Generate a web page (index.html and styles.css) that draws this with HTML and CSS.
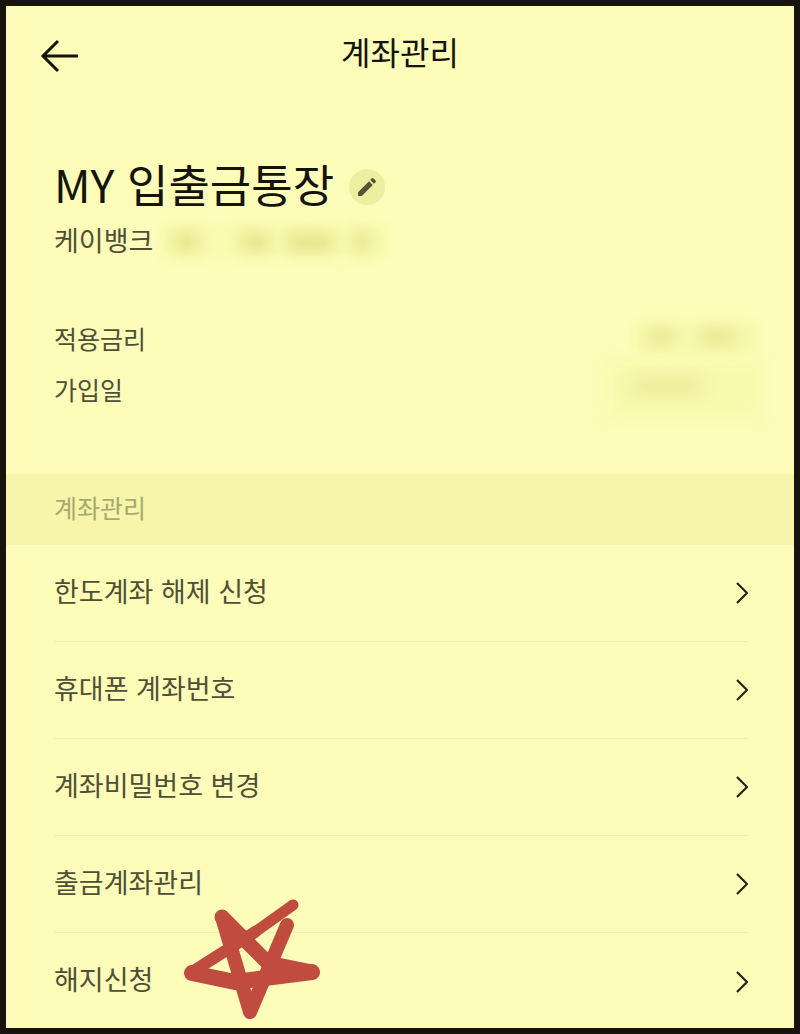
FILE: index.html
```html
<!DOCTYPE html>
<html lang="ko">
<head>
<meta charset="utf-8">
<title>계좌관리</title>
<link rel="stylesheet" href="styles.css">
</head>
<body>
<main class="screen">
  <header class="topbar">
    <svg class="back" viewBox="0 0 40 34" width="40" height="34"><path d="M38 17H3M18 2 3 17l15 15" /></svg>
    <h1 class="page-title">계좌관리</h1>
  </header>
  <section class="account">
    <div class="name-row">
      <h2 class="account-name">MY 입출금통장</h2>
      <span class="edit">
        <svg viewBox="0 0 24 24" width="24" height="24"><path d="M3 17.25V21h3.75L17.81 9.94l-3.75-3.75L3 17.25zM20.71 7.04a1 1 0 0 0 0-1.41l-2.34-2.34a1 1 0 0 0-1.41 0l-1.83 1.83 3.75 3.75 1.83-1.83z"/></svg>
      </span>
    </div>
    <div class="bank-row">
      <span class="bank">케이뱅크</span>
      <span class="redact redact-number"><i class="smear s1"></i><i class="smear s2"></i><i class="smear s3"></i><i class="smear s3b"></i></span>
    </div>
  </section>
  <section class="facts">
    <div class="fact fact-rate">
      <span>적용금리</span>
      <span class="redact redact-rate"><i class="smear s4"></i><i class="smear s5"></i></span>
    </div>
    <div class="fact fact-date">
      <span>가입일</span>
      <span class="redact redact-date"><i class="smear s6"></i></span>
    </div>
  </section>
  <div class="section-head">계좌관리</div>
  <ul class="menu">
    <li class="item"><span>한도계좌 해제 신청</span><svg class="chev" viewBox="0 0 14 24" width="14" height="24"><path d="M3 2l10 10L3 22"/></svg></li>
    <li class="item"><span>휴대폰 계좌번호</span><svg class="chev" viewBox="0 0 14 24" width="14" height="24"><path d="M3 2l10 10L3 22"/></svg></li>
    <li class="item"><span>계좌비밀번호 변경</span><svg class="chev" viewBox="0 0 14 24" width="14" height="24"><path d="M3 2l10 10L3 22"/></svg></li>
    <li class="item"><span>출금계좌관리</span><svg class="chev" viewBox="0 0 14 24" width="14" height="24"><path d="M3 2l10 10L3 22"/></svg></li>
    <li class="item"><span>해지신청</span><svg class="chev" viewBox="0 0 14 24" width="14" height="24"><path d="M3 2l10 10L3 22"/></svg></li>
  </ul>
  <svg class="star" viewBox="0 0 150 130" width="150" height="130">
    <path class="star-thin" d="M118 10 L80 37"/>
    <path class="star-mid" d="M80 37 L17 77"/>
    <path class="star-wide" d="M17 78 L60 87 L137 77"/>
    <path class="star-leg" d="M47 22 L75 117 L112 30"/>
    <path d="M47 22 L93 68 L137 77"/>
  </svg>
</main>
</body>
</html>
```
FILE: styles.css
```css
* { box-sizing: border-box; }
html, body { margin: 0; padding: 0; }
body {
  width: 800px;
  height: 1034px;
  background: #16140c;
  padding: 6px;
  font-family: "Noto Sans CJK KR", "Noto Sans", sans-serif;
  overflow: hidden;
}
.screen {
  position: relative;
  width: 788px;
  height: 1022px;
  background: #fdfcb8;
  overflow: hidden;
}
.topbar {
  position: relative;
  height: 94px;
  display: flex;
  align-items: center;
  justify-content: center;
}
.back {
  position: absolute;
  left: 34px;
  top: 33px;
  fill: none;
  stroke: #14130c;
  stroke-width: 3;
}
.page-title {
  margin: 0 0 4px;
  font-size: 32px;
  line-height: 94px;
  font-weight: 400;
  color: #14130c;
}
.account { padding: 48px 0 0 48px; }
.name-row { display: flex; align-items: center; gap: 15px; height: 72px; }
.account-name {
  margin: 0;
  font-size: 45px;
  line-height: 72px;
  font-weight: 400;
  color: #14130c;
  white-space: nowrap;
}
.edit {
  width: 36px;
  height: 36px;
  margin-top: 6px;
  border-radius: 50%;
  background: #eeeea0;
  display: flex;
  align-items: center;
  justify-content: center;
}
.edit svg { fill: #55553a; }
.bank-row { display: flex; align-items: center; gap: 8px; height: 34px; margin-top: 3px; }
.bank { font-size: 27px; line-height: 34px; color: #4f4f36; white-space: nowrap; }
.redact { display: block; position: relative; background: #fafab0; filter: blur(2px); }
.redact-number { width: 227px; height: 33px; }
.smear { position: absolute; display: block; background: #e6e68f; filter: blur(7px); }
.s1 { left: 12px; top: 8px; width: 26px; height: 20px; }
.s2 { left: 80px; top: 8px; width: 28px; height: 20px; }
.s3 { left: 126px; top: 8px; width: 46px; height: 20px; }
.s3b { left: 192px; top: 8px; width: 18px; height: 20px; }
.facts { padding: 56px 28px 0 48px; }
.fact { display: flex; align-items: center; justify-content: space-between; font-size: 25px; color: #4f4f36; }
.fact-rate { height: 50px; }
.fact-date { height: 52px; }
.redact-rate { width: 122px; height: 30px; margin-right: 9px; background: #f9f9ae; filter: blur(3px); }
.redact-date { width: 150px; height: 54px; margin-right: 6px; background: #f9f9ae; filter: blur(6px); }
.s4 { left: 14px; top: 6px; width: 24px; height: 16px; }
.s5 { left: 66px; top: 6px; width: 34px; height: 16px; }
.s6 { left: 22px; top: 16px; width: 70px; height: 16px; background: #eaea95; }
.section-head {
  margin-top: 59px;
  height: 71px;
  padding-left: 48px;
  background: #f6f5a9;
  font-size: 25px;
  line-height: 67px;
  color: #a8a86f;
}
.menu { list-style: none; margin: 0; padding: 0 46px 0 48px; }
.item {
  height: 97px;
  display: flex;
  align-items: center;
  justify-content: space-between;
  border-bottom: 1px solid #f1f0ae;
  font-size: 27px;
  color: #4f4f36;
  padding-bottom: 6px;
}
.item:last-child { border-bottom: 0; }
.chev { margin-top: 6px; fill: none; stroke: #26241a; stroke-width: 2.2; }
.star {
  position: absolute;
  left: 169px;
  top: 889px;
  fill: none;
  stroke: #c04b3f;
  stroke-width: 15;
  stroke-linecap: round;
  stroke-linejoin: round;
}
.star-thin { stroke-width: 11; }
.star-mid { stroke-width: 12; }
.star-wide { stroke-width: 16; }
.star-leg { stroke-width: 14; }
```
